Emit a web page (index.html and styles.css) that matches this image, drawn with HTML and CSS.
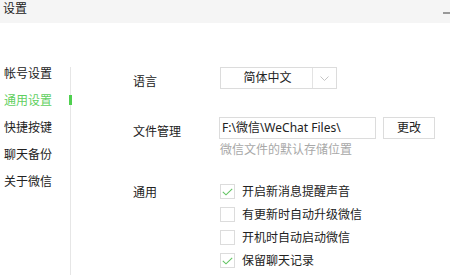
FILE: index.html
```html
<!DOCTYPE html>
<html>
<head>
	<title>设置</title>
	<meta charset="UTF-8">
	<link rel="stylesheet" href="styles.css">
</head>
<body>
	<header class="titlebar">
		<span class="title">设置</span>
		<span class="min"></span>
	</header>

	<div class="content">
		<nav class="side">
			<ul>
				<li>帐号设置</li>
				<li class="active">通用设置</li>
				<li>快捷按键</li>
				<li>聊天备份</li>
				<li>关于微信</li>
			</ul>
		</nav>

		<main class="panel">
			<div class="row row-lang">
				<span class="label">语言</span>
				<div class="select">
					<span class="select-text">简体中文</span>
					<span class="select-arrow">
						<svg width="9" height="5" viewBox="0 0 9 5"><path d="M0.5 0.5 L4.5 4.5 L8.5 0.5" fill="none" stroke="#c4c4c4" stroke-width="1"/></svg>
					</span>
				</div>
			</div>

			<div class="row row-file">
				<span class="label">文件管理</span>
				<div class="field">
					<div class="field-line">
						<div class="input">F:\微信\WeChat Files\</div>
						<div class="btn">更改</div>
					</div>
					<div class="hint">微信文件的默认存储位置</div>
				</div>
			</div>

			<div class="row row-general">
				<span class="label">通用</span>
				<ul class="checks">
					<li><span class="box checked"><svg width="11" height="8" viewBox="0 0 11 8"><path d="M0.8 3.8 L4 6.8 L10.2 0.8" fill="none" stroke="#62c462" stroke-width="1.1"/></svg></span>开启新消息提醒声音</li>
					<li><span class="box"></span>有更新时自动升级微信</li>
					<li><span class="box"></span>开机时自动启动微信</li>
					<li><span class="box checked"><svg width="11" height="8" viewBox="0 0 11 8"><path d="M0.8 3.8 L4 6.8 L10.2 0.8" fill="none" stroke="#62c462" stroke-width="1.1"/></svg></span>保留聊天记录</li>
				</ul>
			</div>
		</main>
	</div>
</body>
</html>
```

FILE: styles.css
```css
body {
	margin: 0;
	padding: 0;
	width: 450px;
	height: 275px;
	overflow: hidden;
	background-color: #fff;
	font-family: "Noto Sans", "Noto Sans CJK SC", sans-serif;
	font-size: 12px;
	color: #222;
}
ul {
	list-style: none;
	margin: 0;
	padding: 0;
}

.titlebar {
	height: 23px;
	background-color: #f5f5f5;
	display: flex;
	align-items: center;
	justify-content: space-between;
	padding-left: 3px;
}
.title {
	font-size: 12px;
	line-height: 14px;
	margin-top: -5px;
}
.min {
	width: 7px;
	height: 2px;
	background-color: #999;
	margin-top: 2px;
}

.content {
	display: flex;
}

.side {
	width: 70px;
	margin-top: 44px;
	height: 208px;
	border-right: 1px solid #e6e6e6;
}
.side ul {
	margin-top: -7px;
	padding-left: 4px;
}
.side li {
	position: relative;
	line-height: 27px;
	height: 27px;
	color: #222;
}
.side li.active {
	color: #5fcf5f;
}
.side li.active::after {
	content: "";
	position: absolute;
	right: -2px;
	top: 8px;
	width: 3px;
	height: 10px;
	background-color: #4fd04f;
}

.panel {
	flex: 1;
	padding-left: 62px;
	padding-top: 44px;
}
.row {
	display: flex;
	align-items: flex-start;
}
.label {
	width: 87px;
	flex-shrink: 0;
	line-height: 14px;
	padding-top: 8px;
}

.select {
	display: flex;
	width: 115px;
	height: 20px;
	border: 1px solid #dcdcdc;
}
.select-text {
	width: 89px;
	text-align: center;
	line-height: 20px;
	padding-left: 2px;
}
.select-arrow {
	flex: 1;
	border-left: 1px solid #e3e3e3;
	display: flex;
	align-items: center;
	justify-content: center;
}

.row-file {
	margin-top: 28px;
}
.field-line {
	display: flex;
	gap: 7px;
	margin-left: -1px;
}
.input {
	width: 153px;
	height: 20px;
	line-height: 20px;
	border: 1px solid #dcdcdc;
	padding-left: 2px;
	white-space: nowrap;
	overflow: hidden;
}
.btn {
	width: 50px;
	height: 20px;
	line-height: 20px;
	border: 1px solid #dcdcdc;
	text-align: center;
}
.hint {
	color: #a8a8a8;
	line-height: 14px;
	margin-top: 4px;
}

.row-general {
	margin-top: 27px;
}
.row-general .label {
	padding-top: 2px;
}
.checks li {
	display: flex;
	align-items: center;
	height: 15px;
	margin-bottom: 8px;
	line-height: 15px;
}
.box {
	width: 13px;
	height: 13px;
	border: 1px solid #dcdcdc;
	margin-right: 7px;
	display: flex;
	align-items: center;
	justify-content: center;
}
```
